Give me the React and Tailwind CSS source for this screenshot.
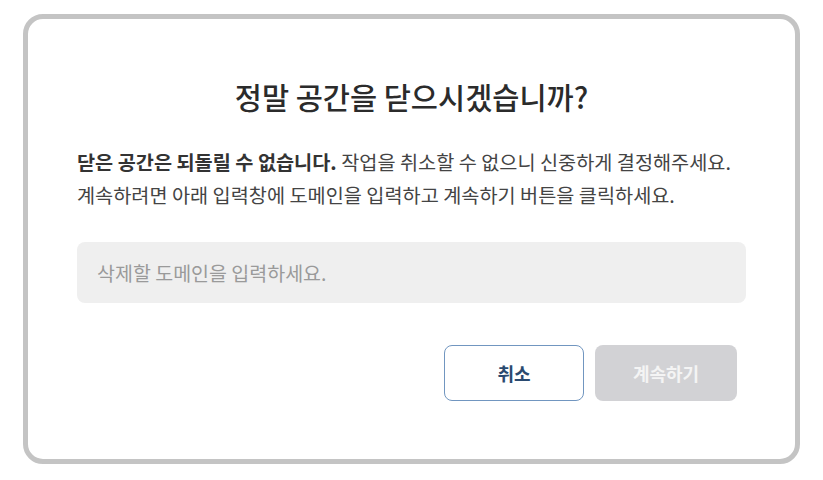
export default function App() {
  return (
    <div className="w-[823px] h-[480px] bg-white pt-[14px] pl-[23px] font-['Noto_Sans_CJK_KR','Noto_Sans',sans-serif]">
      <div className="w-[777px] h-[450px] border-[5px] border-[#c4c4c4] rounded-[20px] bg-white px-[49px] pt-[53px]">
        <h2 className="text-center text-[29.5px] font-medium text-[#2b2b2b] leading-[48px]">정말 공간을 닫으시겠습니까?</h2>
        <p className="mt-[25px] text-[19.7px] leading-[33px] text-[#444]">
          <span className="font-bold text-[#333]">닫은 공간은 되돌릴 수 없습니다.</span> 작업을 취소할 수 없으니 신중하게 결정해주세요.
          <br />
          계속하려면 아래 입력창에 도메인을 입력하고 계속하기 버튼을 클릭하세요.
        </p>
        <input
          type="text"
          placeholder="삭제할 도메인을 입력하세요."
          className="mt-[31px] w-full h-[61px] rounded-[8px] bg-[#efefef] px-[20px] text-[19.5px] text-[#333] placeholder:text-[#9a9a9a] outline-none"
        />
        <div className="mt-[42px] flex justify-end gap-[11px] pr-[9px]">
          <button className="w-[140px] h-[56px] rounded-[8px] border border-[#7196c0] bg-white text-[18px] font-bold text-[#2a4a70]">취소</button>
          <button className="w-[142px] h-[56px] rounded-[8px] bg-[#d2d2d5] text-[18px] font-bold text-[#f4f4f4]">계속하기</button>
        </div>
      </div>
    </div>
  );
}
